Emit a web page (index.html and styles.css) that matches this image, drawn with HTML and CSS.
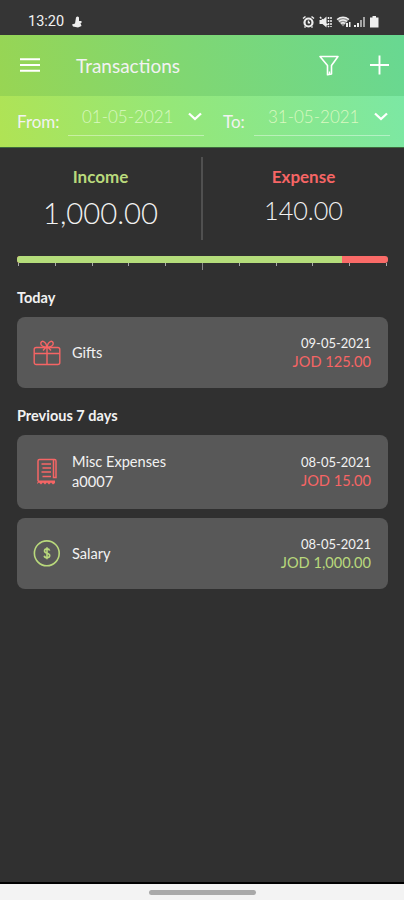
FILE: index.html
```html
<!DOCTYPE html>
<html lang="en">
<head>
    <meta charset="UTF-8">
    <meta name="viewport" content="width=device-width, initial-scale=1.0">
    <title>Transactions</title>
    <link rel="stylesheet" href="styles.css">
</head>
<body>
    <div class="statusbar">
        <span class="clock">13:20</span>
        <svg class="status-app" width="10" height="12" viewBox="0 0 10 12">
            <path d="M4 1.500Q5.500-.5 7 1.500v3.500h2.500v2H8.500l1 3L6 11.500 1 10.500 0 8.500l3-1z" fill="#eee"/>
        </svg>
        <svg class="status-icons" width="78" height="14" viewBox="0 0 78 14">
            <g fill="none" stroke="#eee" stroke-width="1.500">
                <circle cx="6.500" cy="7.500" r="4" stroke-width="2.200"/>
                <path d="M1 3.500 3.500 1.500M12 3.500 9.500 1.500M2.500 12.500l1-1M10.500 12.500l-1-1M6.500 5.500v2.200h1.500"/>
                <path d="M18 2l9 10M26.500 2v10M29 2v10" stroke-dasharray="2 1"/>
                <path d="M35 4.500q6-4.500 12 0M37 6.500q4-3 8 0M39 8.500q2-1.500 4 0"/>
            </g>
            <g fill="#eee">
                <path d="M17.500 5h3l4-3.500v11L20.500 9h-3z"/>
                <path d="M35 4.500q6-4 12 0l-6 7z" opacity=".5"/>
                <path d="M44 8h2v4h-2zM47 7h1.500v5H47zM52 10h2v2h-2zM55 8h2v4h-2z"/>
                <path d="M58 5h2v7h-2zM61 2h2v10h-2z" opacity=".6"/>
                <path d="M70.500 1h3.500v1.500h2.500v10H68v-10h2.500z"/>
            </g>
        </svg>
    </div>

    <div class="top">
        <div class="toolbar">
            <svg class="burger" width="20" height="14" viewBox="0 0 20 14">
                <path d="M0 1.200h20M0 7h20M0 12.800h20" stroke="#fff" stroke-width="2"/>
            </svg>
            <h1 class="title">Transactions</h1>
            <svg class="filter" width="20" height="21" viewBox="0 0 20 21">
                <path d="M1 1.500h18l-6.500 9v8.500l-4 .8v-9.300z" fill="none" stroke="#fff" stroke-width="1.600" stroke-linejoin="round"/>
                <path d="M10.500 16.500v2.500" stroke="#fff" stroke-width="1.500"/>
            </svg>
            <svg class="plus" width="19" height="20" viewBox="0 0 19 20">
                <path d="M0 10h19M9.500.5v19" stroke="#fff" stroke-width="1.900"/>
            </svg>
        </div>
        <div class="range">
            <span class="range-label">From:</span>
            <div class="date-field">
                <span>01-05-2021</span>
                <svg width="14" height="9" viewBox="0 0 14 9"><path d="M1 1.500l6 5.500 6-5.500" fill="none" stroke="#fff" stroke-width="2.300"/></svg>
            </div>
            <span class="range-label range-to">To:</span>
            <div class="date-field">
                <span>31-05-2021</span>
                <svg width="14" height="9" viewBox="0 0 14 9"><path d="M1 1.500l6 5.500 6-5.500" fill="none" stroke="#fff" stroke-width="2.300"/></svg>
            </div>
        </div>
    </div>

    <div class="summary">
        <div class="total">
            <div class="total-name income">Income</div>
            <div class="total-value">1,000.00</div>
        </div>
        <div class="separator"></div>
        <div class="total">
            <div class="total-name expense">Expense</div>
            <div class="total-value total-small">140.00</div>
        </div>
    </div>

    <div class="balance">
        <div class="bar">
            <div class="bar-income" style="width: 87.700%"></div>
        </div>
        <div class="ticks">
            <i></i><i></i><i></i><i></i><i></i><i class="tick-mid"></i><i></i><i></i><i></i><i></i><i></i>
        </div>
    </div>

    <div class="list">
        <h2 class="group">Today</h2>
        <div class="card">
            <svg class="icon" width="28" height="28" viewBox="0 0 28 28" fill="none" stroke="#f66565" stroke-width="1.400">
                <rect x="1.200" y="8.500" width="25.600" height="17" rx="2"/>
                <path d="M1.200 14.500h25.600M14 8.500v17"/>
                <path d="M14 8.500C10 8 7.500 6.500 7.800 4.200 8.200 1 13 1.500 14 8.500zM14 8.500c4-.5 6.500-2 6.200-4.300C19.800 1 15 1.500 14 8.500zM14 7l-4 4.500M14 7l4 4.500"/>
            </svg>
            <div class="name">Gifts</div>
            <div class="info">
                <div class="date">09-05-2021</div>
                <div class="amount expense">JOD 125.00</div>
            </div>
        </div>

        <h2 class="group">Previous 7 days</h2>
        <div class="card card-tall">
            <svg class="icon" width="28" height="28" viewBox="0 0 28 28" fill="none" stroke="#f66565" stroke-width="1.500">
                <path d="M5 23V3A1.500 1.500 0 0 1 6.500 1.500h15A1.500 1.500 0 0 1 23 3v16.500h-2.500V2"/>
                <path d="M8.500 6H18M9.500 10H18M8.500 14H18M9.500 18.500H18"/>
                <path d="M5 22.500h17v2.500l-2 1.500-2-2-2 2-2-2-2 2-2-2-2 2-2-2-2 1.500z" fill="#f66565" stroke="none"/>
            </svg>
            <div class="name">Misc Expenses<br>a0007</div>
            <div class="info">
                <div class="date">08-05-2021</div>
                <div class="amount expense">JOD 15.00</div>
            </div>
        </div>
        <div class="card">
            <svg class="icon" width="28" height="28" viewBox="0 0 28 28" fill="none" stroke="#b9d97c" stroke-width="1.600">
                <circle cx="13.800" cy="13.300" r="12.400"/>
                <path d="M16.600 10.600c-.3-1.200-1.300-1.700-2.600-1.700-1.500 0-2.500.8-2.500 2.100 0 3 5.200 1.500 5.200 4.500 0 1.400-1.100 2.200-2.700 2.200-1.500 0-2.500-.7-2.800-2M14 7.200v12"/>
            </svg>
            <div class="name">Salary</div>
            <div class="info">
                <div class="date">08-05-2021</div>
                <div class="amount income">JOD 1,000.00</div>
            </div>
        </div>
    </div>

    <div class="navbar">
        <div class="handle"></div>
    </div>
</body>
</html>
```
FILE: styles.css
```css
*{
    box-sizing: border-box;
}
body{
    margin: 0px;
    height: 900px;
    display: flex;
    flex-direction: column;
    background-color: #303030;
    color: #f2f2f2;
    font-family: Lato, "Liberation Sans", sans-serif;
    overflow: hidden;
}
svg{
    display: block;
    flex: none;
}
.statusbar{
    display: flex;
    align-items: center;
    height: 35px;
    padding: 8px 24px 0 28px;
    background-color: #353535;
    font-family: Roboto, sans-serif;
    font-size: 14.5px;
}
.status-app{
    margin-left: 8px;
}
.status-icons{
    margin-left: auto;
}
.top{
    height: 113px;
    background: linear-gradient(75deg, #b0e354 0%, #96e777 40%, #7ae8a7 100%);
    border-bottom: 1px solid #3e6b3d;
}
.toolbar{
    display: flex;
    align-items: center;
    height: 61px;
    padding: 0 15px 0 20px;
    background: linear-gradient(75deg, #98d553 0%, #80d772 45%, #68d892 100%);
}
.burger{
    margin-top: -1px;
}
.title{
    margin: 0 0 0 36px;
    font-size: 19px;
    font-weight: 400;
}
.filter{
    margin-left: auto;
    margin-right: 31px;
}
.plus{
    margin-top: -1px;
}
.range{
    display: flex;
    height: 51px;
    padding: 0 15px 0 17px;
}
.range-label{
    flex: none;
    width: 51px;
    padding-top: 15px;
    font-size: 17px;
    line-height: 21px;
}
.range-to{
    width: 31px;
    margin-left: 19px;
}
.date-field{
    display: flex;
    flex: none;
    justify-content: space-between;
    width: 136px;
    height: 40px;
    padding: 10px 2px 0 14px;
    border-bottom: 1.5px solid rgba(255, 255, 255, 0.4);
    color: #d9f8c0;
    font-size: 17px;
    font-weight: 300;
    line-height: 22px;
}
.date-field svg{
    margin-top: 6px;
}
.summary{
    display: flex;
    height: 108px;
    padding-top: 9px;
}
.total{
    flex: 1;
    padding-top: 9px;
    text-align: center;
}
.total-name{
    font-size: 17px;
    font-weight: 700;
    line-height: 22px;
}
.total-value{
    font-size: 29.3px;
    font-weight: 300;
    line-height: 34px;
    margin-top: 8px;
}
.total-small{
    font-size: 25.2px;
    line-height: 30px;
    margin-top: 7px;
}
.separator{
    width: 2px;
    height: 83px;
    background-color: #505050;
}
.income{
    color: #b9d97c;
}
.expense{
    color: #f66565;
}
.balance{
    height: 24px;
    padding: 0 16px 0 17px;
}
.bar{
    height: 7px;
    border-radius: 3px;
    background-color: #fa6b68;
    overflow: hidden;
}
.bar-income{
    height: 7px;
    background-color: #b5dd7b;
}
.ticks{
    display: flex;
    justify-content: space-between;
    padding: 0 1px;
}
.ticks i{
    width: 1px;
    height: 3px;
    background-color: #aaa;
}
.ticks .tick-mid{
    height: 7px;
    background-color: #888;
}
.list{
    flex: 1;
    padding: 6px 16px 0 17px;
}
.group{
    margin: 0;
    height: 31px;
    font-size: 14.5px;
    font-weight: 700;
    line-height: 24px;
}
.card{
    display: flex;
    align-items: center;
    height: 71px;
    padding: 0 17px 0 16px;
    border-radius: 8px;
    background-color: #585858;
}
.card + .group{
    margin-top: 16px;
}
.card + .card{
    margin-top: 9px;
}
.card-tall{
    height: 74px;
}
.name{
    margin-left: 11px;
    font-size: 14.6px;
    line-height: 20px;
}
.info{
    margin-left: auto;
    text-align: right;
}
.date{
    font-size: 13px;
    line-height: 18px;
}
.amount{
    font-size: 14.6px;
    line-height: 20px;
}
.navbar{
    height: 18px;
    border-top: 2px solid #000;
    background-color: #f3f3f3;
    padding-top: 6px;
}
.handle{
    width: 107px;
    height: 5px;
    margin: 0 auto;
    border-radius: 3px;
    background-color: #a9a9a9;
}
```
